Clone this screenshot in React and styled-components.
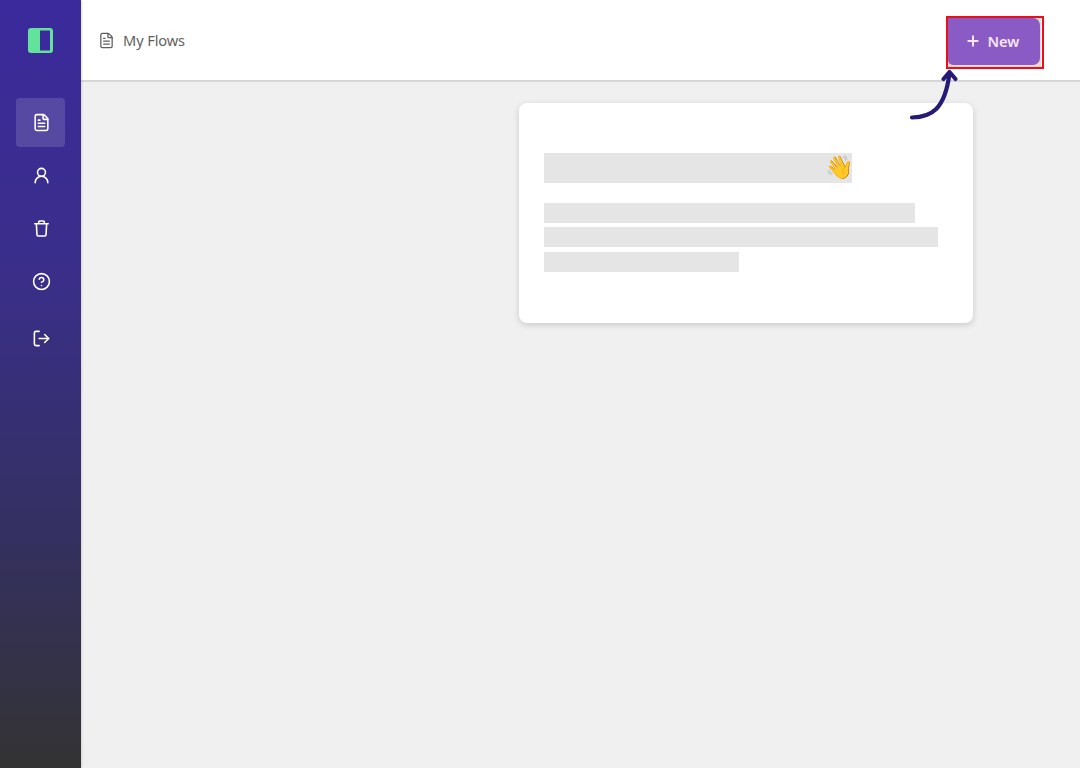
import React from "react";
import styled, { createGlobalStyle } from "styled-components";
import { FileText, UserRound, CircleHelp, LogOut, Plus } from "lucide-react";

const Global = createGlobalStyle`
  html, body { margin: 0; padding: 0; height: 100%; }
  #root { height: 100%; }
  body { font-family: "Noto Sans", "Open Sans", sans-serif; background: #f0f0f0; overflow: hidden; }
`;

const Page = styled.div`
  display: flex;
  width: 1080px;
  height: 768px;
  position: relative;
  overflow: hidden;
`;

const Sidebar = styled.nav`
  width: 81px;
  flex: none;
  display: flex;
  flex-direction: column;
  align-items: center;
  background: linear-gradient(180deg, #3a2a9c 0%, #3a2e8a 35%, #343060 70%, #333333 100%);
  box-shadow: 1px 0 2px rgba(0, 0, 0, 0.12);
  z-index: 2;
`;

const LogoWrap = styled.div`
  height: 81px;
  margin-bottom: 17px;
  display: flex;
  align-items: center;
  justify-content: center;
`;

const NavList = styled.div`
  display: flex;
  flex-direction: column;
  gap: 4px;
`;

const NavItem = styled.div`
  width: 49px;
  height: 49px;
  box-sizing: border-box;
  padding: 0 0 1px 1px;
  border-radius: 4px;
  display: flex;
  align-items: center;
  justify-content: center;
  color: #fff;
  margin-top: ${(p) => (p.$gapTop ? "4px" : "0")};
  background: ${(p) => (p.$active ? "rgba(255, 255, 255, 0.14)" : "transparent")};
`;

const Main = styled.div`
  flex: 1;
  display: flex;
  flex-direction: column;
  min-width: 0;
`;

const Header = styled.header`
  height: 82px;
  box-sizing: border-box;
  background: #fff;
  border-bottom: 2px solid #d6d6d6;
  display: flex;
  align-items: center;
  justify-content: space-between;
  padding: 0 39px 0 17px;
`;

const Crumb = styled.div`
  display: flex;
  align-items: center;
  gap: 8px;
  color: #5f5f5f;
  font-size: 14.6px;
  letter-spacing: -0.1px;
`;

const ButtonFrame = styled.div`
  width: 93px;
  height: 49px;
  margin-top: 4px;
  background: #f6d6cc;
`;

const NewButton = styled.button`
  width: 92px;
  height: 47px;
  border: 0;
  border-radius: 0 7px 7px 5px;
  background: #8a5bc5;
  color: #f6e6ef;
  font: 600 14.6px "Noto Sans", sans-serif;
  display: flex;
  align-items: center;
  justify-content: center;
  gap: 7px;
  padding: 0 4px 0 0;
`;

const Content = styled.main`
  flex: 1;
  display: flex;
  justify-content: flex-end;
  align-items: flex-start;
  padding: 21px 107px 0 0;
`;

const Card = styled.section`
  width: 454px;
  height: 220px;
  box-sizing: border-box;
  padding: 50px 25px 0;
  background: #fff;
  border-radius: 8px;
  box-shadow: 0 2px 6px rgba(0, 0, 0, 0.16);
`;

const Title = styled.div`
  width: 308px;
  height: 30px;
  margin-bottom: 20px;
  background: #e5e5e5;
  display: flex;
  align-items: center;
  justify-content: flex-end;
`;

const Wave = styled.span`
  font-size: 23px;
  line-height: 30px;
  margin-right: -2px;
  font-family: "Noto Color Emoji", sans-serif;
`;

const Lines = styled.div`
  display: flex;
  flex-direction: column;
  gap: 4px;
`;

const Line = styled.div`
  height: 20px;
  width: ${(p) => p.$w}px;
  margin-top: ${(p) => p.$mt || 0}px;
  background: #e5e5e5;
`;

const Highlight = styled.div`
  position: absolute;
  left: 946px;
  top: 16px;
  width: 98px;
  height: 53px;
  box-sizing: border-box;
  border: 2px solid #e8101c;
  pointer-events: none;
`;

const Arrow = styled.svg`
  position: absolute;
  left: 905px;
  top: 66px;
`;

const TrashIcon = ({ size, strokeWidth }) => (
  <svg width={size} height={size} viewBox="0 0 24 24" fill="none" stroke="currentColor" strokeWidth={strokeWidth} strokeLinecap="round" strokeLinejoin="round">
    <path d="M3.500 6h17M8.500 6V3.500a1 1 0 0 1 1-1h5a1 1 0 0 1 1 1V6M5.500 6l.8 14a1.500 1.500 0 0 0 1.500 1.500h8.400a1.500 1.500 0 0 0 1.500-1.500l.8-14" />
  </svg>
);

const navItems = [
  { Icon: FileText, active: true },
  { Icon: UserRound },
  { Icon: TrashIcon },
  { Icon: CircleHelp },
  { Icon: LogOut, gapTop: true },
];

export default function App() {
  return (
    <Page>
      <Global />
      <Sidebar>
        <LogoWrap>
          <svg width="25" height="25" viewBox="0 0 25 25">
            <rect width="25" height="25" rx="3" fill="#62e29b" />
            <rect x="12" y="2.500" width="10" height="20" fill="#3a2a9c" />
          </svg>
        </LogoWrap>
        <NavList>
          {navItems.map(({ Icon, active, gapTop }, i) => (
            <NavItem key={i} $active={active} $gapTop={gapTop}>
              <Icon size={19} strokeWidth={2} />
            </NavItem>
          ))}
        </NavList>
      </Sidebar>
      <Main>
        <Header>
          <Crumb>
            <FileText size={17} strokeWidth={1.8} />
            My Flows
          </Crumb>
          <ButtonFrame>
            <NewButton>
              <Plus size={16} strokeWidth={3} />
              New
            </NewButton>
          </ButtonFrame>
        </Header>
        <Content>
          <Card>
            <Title>
              <Wave>👋</Wave>
            </Title>
            <Lines>
              <Line $w={371} />
              <Line $w={394} />
              <Line $w={195} $mt={1} />
            </Lines>
          </Card>
        </Content>
      </Main>
      <Highlight />
      <Arrow width="60" height="60" viewBox="0 0 60 60" fill="none">
        <path
          d="M7 51.500C26 51 40 44 44.500 7M38.500 13l6-7 6 7"
          stroke="#251a78"
          strokeWidth="4.200"
          strokeLinecap="round"
          strokeLinejoin="round"
        />
      </Arrow>
    </Page>
  );
}
